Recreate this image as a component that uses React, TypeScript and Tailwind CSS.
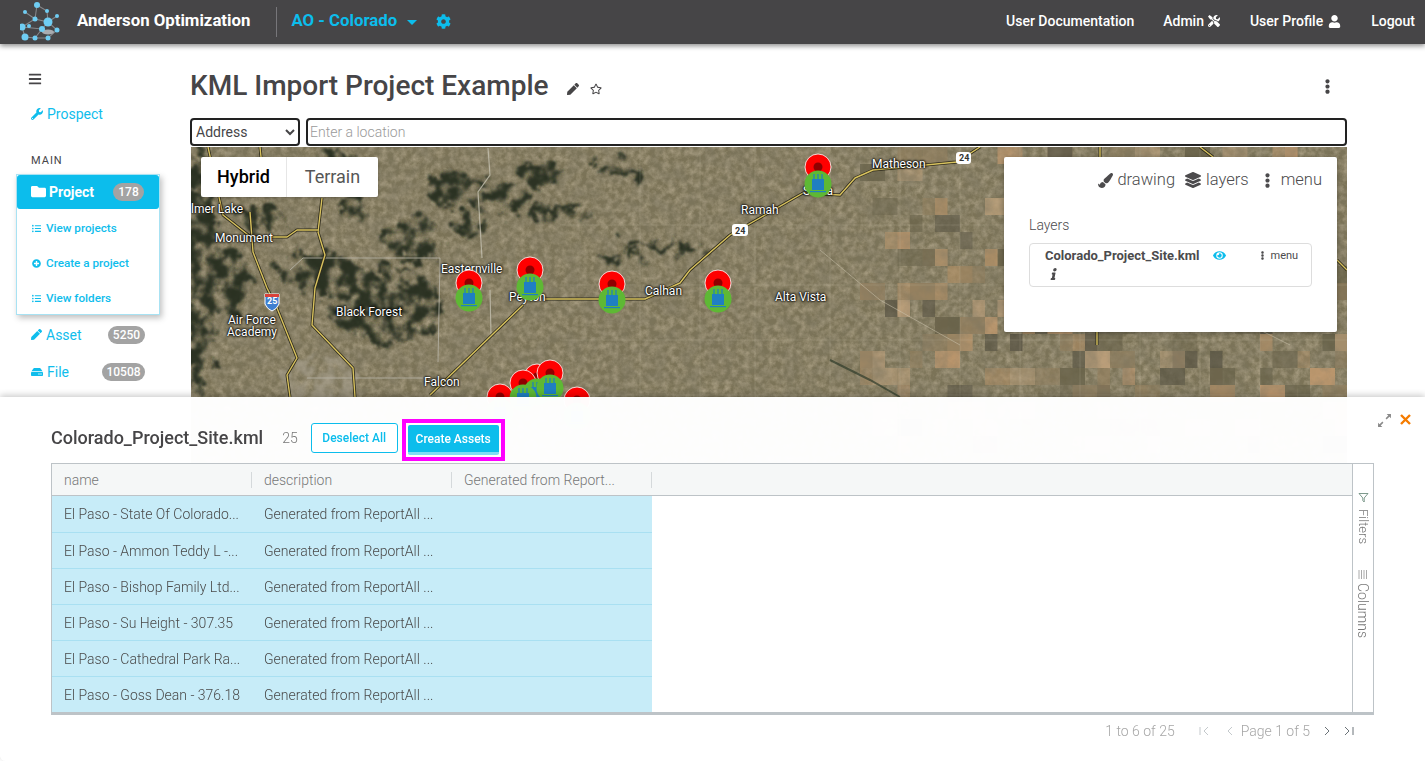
import {
  FaBars, FaCog, FaEllipsisV, FaEye, FaFolder, FaHdd, FaInfo, FaLayerGroup, FaListUl, FaPaintBrush, FaPen,
  FaPlusCircle, FaRegStar, FaTools, FaUser, FaWrench,
} from 'react-icons/fa';

const FONT = "font-['Roboto','Liberation_Sans',sans-serif]";

const rows = [
  'El Paso - State Of Colorado...',
  'El Paso - Ammon Teddy L -...',
  'El Paso - Bishop Family Ltd...',
  'El Paso - Su Height - 307.35',
  'El Paso - Cathedral Park Ra...',
  'El Paso - Goss Dean - 376.18',
];

const labels = [
  { text: 'lmer Lake', x: 191, y: 209 },
  { text: 'Monument', x: 215, y: 238 },
  { text: 'Black Forest', x: 336, y: 312 },
  { text: 'Easternville', x: 441, y: 269 },
  { text: 'Peyton', x: 509, y: 297 },
  { text: 'Falcon', x: 424, y: 382 },
  { text: 'Calhan', x: 645, y: 291 },
  { text: 'Ramah', x: 741, y: 210 },
  { text: 'Simla', x: 803, y: 191 },
  { text: 'Matheson', x: 872, y: 164 },
  { text: 'Alta Vista', x: 775, y: 297 },
  { text: 'Air Force', x: 228, y: 320 },
  { text: 'Academy', x: 227, y: 332 },
];

const pins = [
  { x: 469, y: 283, gy: 298 },
  { x: 612, y: 284, gy: 300 },
  { x: 718, y: 283, gy: 299 },
  { x: 818, y: 167, gy: 184 },
  { x: 530, y: 270, gy: 287 },
  { x: 500, y: 397, gy: 412 },
  { x: 577, y: 400, gy: 416 },
  { x: 537, y: 377, gy: 392 },
  { x: 550, y: 373, gy: 388 },
  { x: 523, y: 383, gy: 398 },
];

const forest = [
  [198, 270, 18, 125], [262, 218, 22, 14], [318, 272, 42, 20], [385, 305, 58, 38], [412, 237, 30, 24],
  [452, 190, 24, 20], [500, 198, 32, 16], [540, 172, 22, 14], [470, 225, 20, 9], [228, 282, 22, 36],
  [352, 205, 14, 16], [620, 170, 24, 10], [200, 180, 14, 34], [560, 214, 34, 6], [660, 247, 46, 5],
  [620, 258, 30, 4], [340, 160, 20, 10],
];

// fixed pseudo random numbers so the fields stay the same on every load
function rnd(i: number) {
  const v = Math.sin(i * 12.9898) * 43758.5453;
  return v - Math.floor(v);
}

const fieldColors = ['#b08f66', '#bb9f7a', '#5a5544', '#94805f', '#686249', '#c0986e'];
const fields = Array.from({ length: 240 }, (_, i) => ({
  x: 860 + Math.floor(rnd(i + 1) * 40) * 12.5,
  y: 147 + Math.floor(rnd(i + 300) * 18) * 17,
  w: rnd(i + 600) > 0.5 ? 12.5 : 25,
  fill: fieldColors[Math.floor(rnd(i + 900) * 6)],
  o: 0.45 + rnd(i + 1200) * 0.5,
}));

function MapArt() {
  const road = (d: string, key: string) => (
    <g key={key} fill="none" strokeLinejoin="round">
      <path d={d} stroke="#2d2a1c" strokeWidth="3" />
      <path d={d} stroke="#d8c25e" strokeWidth="1.4" />
    </g>
  );
  return (
    <svg viewBox="191 147 1156 320" className="absolute inset-0 w-full h-full" preserveAspectRatio="none">
      <defs>
        <filter id="grain" x="0" y="0" width="100%" height="100%">
          <feTurbulence type="fractalNoise" baseFrequency="0.06" numOctaves="5" seed="7" />
          <feColorMatrix values="0 0 0 0 0.2  0 0 0 0 0.18  0 0 0 0 0.12  0.9 0 0 0 -0.3" />
        </filter>
        <filter id="grainLight" x="0" y="0" width="100%" height="100%">
          <feTurbulence type="fractalNoise" baseFrequency="0.16" numOctaves="4" seed="21" />
          <feColorMatrix values="0 0 0 0 0.72  0 0 0 0 0.62  0 0 0 0 0.46  0 0.8 0 0 -0.25" />
        </filter>
        <filter id="rough" x="-30%" y="-30%" width="160%" height="160%">
          <feTurbulence type="fractalNoise" baseFrequency="0.07" numOctaves="4" seed="3" result="n" />
          <feDisplacementMap in="SourceGraphic" in2="n" scale="34" result="d" />
          <feColorMatrix in="n" values="0 0 0 0 0  0 0 0 0 0  0 0 0 0 0  0 0 5 0 -1.9" result="m" />
          <feComposite in="d" in2="m" operator="in" />
          <feGaussianBlur stdDeviation="1.3" />
        </filter>
      </defs>
      <rect x="191" y="147" width="1156" height="320" fill="#7b7357" />
      <rect x="191" y="147" width="1156" height="320" filter="url(#grainLight)" />
      {fields.map((f, i) => (
        <rect key={i} x={f.x} y={f.y} width={f.w} height="17" fill={f.fill} opacity={f.o} />
      ))}
      <rect x="191" y="147" width="1156" height="320" filter="url(#grain)" />
      <g filter="url(#rough)" fill="#232b1d" opacity="0.9">
        {forest.map(([cx, cy, rx, ry], i) => (
          <ellipse key={i} cx={cx} cy={cy} rx={rx} ry={ry} />
        ))}
      </g>
      <ellipse cx="320" cy="385" rx="40" ry="30" fill="#a9a292" opacity="0.55" filter="url(#rough)" />
      <g stroke="#c9c2ac" strokeWidth="0.7" opacity="0.25">
        {[640, 700, 755, 830, 900, 960, 1020, 1080, 1140, 1200, 1260].map((x) => (
          <line key={x} x1={x} y1="147" x2={x} y2="467" />
        ))}
        {[225, 285, 340, 395].map((y) => (
          <line key={y} x1="560" y1={y} x2="1347" y2={y} />
        ))}
      </g>
      <path d="M290 270 L303 258 H440 L438 362 M307 378 H423" fill="none" stroke="#b5b2a5" strokeWidth="1" opacity="0.85" />
      <path d="M488 148 L490 175 L478 192 L482 258 M490 290 L491 335" fill="none" stroke="#c4c0b0" strokeWidth="1.2" opacity="0.8" />
      <path d="M820 250 L880 300 L960 345 M1110 250 L1180 290 L1290 345" fill="none" stroke="#cfc8b2" strokeWidth="1" opacity="0.5" />
      <path d="M830 360 L870 380 L900 397" fill="none" stroke="#2e3a2a" strokeWidth="2" opacity="0.7" />
      {[
        'M208 147 L223 215 L252 238 M250 212 L253 252 L267 288 L277 308 L297 358 L287 375 L290 397',
        'M260 147 L261 157 M322 198 L318 232 L325 255 L315 288 L312 325 L353 368 L355 397',
        'M253 237 H287 L297 230 H318',
        'M523 305 L430 395',
        'M545 299 H645 L680 283 L690 270 L730 235 L803 193 L840 195 L855 178 L873 170 L957 162 L980 147',
        'M1100 147 V157 M1200 147 L1213 157 M1097 332 V345 M1337 260 L1347 270',
      ].map((d, i) => road(d, `r${i}`))}
      <path d="M265 294 h14 v10 q-2 5 -7 7 q-5 -2 -7 -7z" fill="#3f7fd0" stroke="#fff" strokeWidth="1" />
      <rect x="265" y="294" width="14" height="3" fill="#d9423a" />
      <rect x="732" y="224" width="16" height="12" rx="3" fill="#fff" />
      <rect x="956" y="152" width="15" height="12" rx="3" fill="#fff" />
    </svg>
  );
}

// red marker + green asset marker on top, they hide the place names below them
function MapPins() {
  return (
    <svg viewBox="191 147 1156 320" className="absolute inset-0 w-full h-full" preserveAspectRatio="none">
      {pins.map((p, i) => (
        <g key={i}>
          <circle cx={p.x} cy={p.y} r="13" fill="#fe0000" stroke="#fff" strokeWidth="0.8" />
          <circle cx={p.x} cy={p.y} r="4.5" fill="#8f0000" />
        </g>
      ))}
      {pins.map((p, i) => (
        <g key={i}>
          <circle cx={p.x} cy={p.gy} r="13.5" fill="#5eb834" />
          <path d={`M${p.x - 4} ${p.gy - 10} v5 M${p.x} ${p.gy - 10} v5 M${p.x + 4} ${p.gy - 10} v5`} stroke="#1f7fc2" strokeWidth="1.2" />
          <rect x={p.x - 6} y={p.gy - 5} width="12" height="11" fill="#1f7fc2" />
          <rect x={p.x - 8} y={p.gy + 7} width="16" height="1.2" fill="#1f7fc2" />
        </g>
      ))}
    </svg>
  );
}

function Logo() {
  const dots = [
    [37, 3, 3], [47, 9, 2], [57, 14, 2], [25, 10, 2], [35, 17, 2.5], [48, 20, 4.5], [22, 25, 3.5], [42, 27, 3],
    [57, 28, 2.5], [25, 35, 3.5], [35, 36, 2.5], [48, 36, 2.5], [29, 24, 2],
  ];
  return (
    <svg width="40" height="40" viewBox="20 0 40 40" className="shrink-0">
      <path d="M37 3L47 9L48 20L35 17L25 10M37 3L35 17L22 25L25 35L35 36L48 36L57 28L48 20L42 27L22 25M57 14L48 20M42 27L35 36" stroke="#85878b" strokeWidth="1.1" fill="none" />
      <ellipse cx="48" cy="30" rx="6" ry="2.5" fill="#a8abb0" />
      {dots.map(([cx, cy, r], i) => (
        <circle key={i} cx={cx} cy={cy} r={r} fill="#6fcdf3" />
      ))}
    </svg>
  );
}

function Header() {
  return (
    <header className="relative z-10 h-11 bg-[#464547] flex items-center shadow-[0_2px_5px_rgba(0,0,0,0.45)] text-white text-sm font-medium">
      <div className="ml-[20px] w-[40px]">
        <Logo />
      </div>
      <span className="ml-[17px] text-[16.8px] font-bold -mt-[2px]">Anderson Optimization</span>
      <span className="ml-[26px] h-[30px] border-l border-[#77767a]" />
      <span className="ml-[14px] text-[16.8px] font-bold text-[#0cbdec] -mt-[2px]">AO - Colorado</span>
      <span className="ml-[10px] border-x-[5px] border-t-[5px] border-x-transparent border-t-[#0cbdec]" />
      <FaCog className="ml-[19px] text-[#0cbdec] text-[15px] -mt-[2px]" />
      <div className="ml-auto mr-[10px] flex items-center -mt-[2px]">
        <span>User Documentation</span>
        <span className="ml-[29px] flex items-center gap-1">Admin <FaTools className="text-[12px]" /></span>
        <span className="ml-[30px] flex items-center gap-[5px]">User Profile <FaUser className="text-[13px]" /></span>
        <span className="ml-[30px]">Logout</span>
      </div>
    </header>
  );
}

function Badge({ children, className }: { children: React.ReactNode; className: string }) {
  return (
    <span className={`h-[18px] rounded-full bg-[#a3a3a3] text-white text-xs font-medium flex items-center justify-center ${className}`}>
      {children}
    </span>
  );
}

function Sidebar() {
  return (
    <aside className="w-[190px] shrink-0 text-[#0fbdec] text-sm">
      <FaBars className="ml-[28px] mt-[28px] text-[14px] text-[#464547]" />
      <div className="ml-[31px] mt-[18px] flex items-center gap-1 h-5">
        <FaWrench className="text-[12px]" /> Prospect
      </div>
      <div className="ml-[31px] mt-[29px] text-[11px] tracking-[1px] text-[#464547]">MAIN</div>
      <div className="ml-[16px] mt-[5px] w-[144px] h-[141px] border border-[#a8e2f3] shadow-[2px_3px_6px_rgba(0,0,0,0.25)] bg-white">
        <div className="h-[34px] bg-[#0cbdec] rounded-[3px] text-white flex items-center pl-[14px] pr-[15px] font-bold">
          <FaFolder className="text-[15px] mr-[3px]" /> Project
          <Badge className="ml-auto w-[31px]">178</Badge>
        </div>
        <div className="text-[11.7px] font-medium pt-[2px]">
          <div className="h-[35px] flex items-center pl-[15px] gap-[5px]"><FaListUl className="text-[9px]" /> View projects</div>
          <div className="h-[35px] flex items-center pl-[15px] gap-[5px]"><FaPlusCircle className="text-[9px]" /> Create a project</div>
          <div className="h-[35px] flex items-center pl-[15px] gap-[5px]"><FaListUl className="text-[9px]" /> View folders</div>
        </div>
      </div>
      <div className="ml-[31px] w-[114px] mt-[10px] h-[20px] flex items-center gap-1">
        <FaPen className="text-[11px]" /> Asset
        <Badge className="ml-auto w-[37px]">5250</Badge>
      </div>
      <div className="ml-[31px] w-[114px] mt-[17px] h-[20px] flex items-center gap-1">
        <FaHdd className="text-[12px]" /> File
        <Badge className="ml-auto w-[43px]">10508</Badge>
      </div>
    </aside>
  );
}

function MapPanel() {
  return (
    <div className="absolute left-[813px] top-[10px] w-[333px] h-[175px] bg-white rounded-[2px] shadow-[0_1px_4px_rgba(0,0,0,0.3)] text-[#4c4b4d]">
      <div className="flex justify-end items-center h-[45px] pt-[1px] pr-[15px] text-[16.5px] font-light">
        <span className="flex items-center gap-[4px]"><FaPaintBrush className="text-[15px]" /> drawing</span>
        <span className="ml-[10px] flex items-center gap-[5px]"><FaLayerGroup className="text-[16px]" /> layers</span>
        <span className="ml-[11px] flex items-center gap-[6px]"><FaEllipsisV className="text-[15px]" /> menu</span>
      </div>
      <div className="ml-[25px] mt-[14px] text-sm font-light leading-[18px]">Layers</div>
      <div className="ml-[25px] mt-[9px] w-[283px] h-[44px] border border-[#dddddd] rounded-[4px] relative pl-[15px] pt-[3px]">
        <div className="flex items-center text-[13px] font-bold leading-[17px]">
          Colorado_Project_Site.kml
          <FaEye className="ml-[13px] text-[13px] text-[#0cbdec]" />
          <FaEllipsisV className="ml-[32px] text-[9px]" />
          <span className="ml-[4px] text-[11px] font-normal -mt-[1px]">menu</span>
        </div>
        <FaInfo className="ml-[3px] mt-[4px] text-[12px] -skew-x-12" />
      </div>
    </div>
  );
}

function Main() {
  return (
    <main className="flex-1 pr-[78px] min-w-0">
      <div className="h-[74px] flex items-center text-[#464547]">
        <h1 className="text-[28px] font-medium mt-[10px]">KML Import Project Example</h1>
        <FaPen className="ml-[18px] mt-[16px] text-[12px]" />
        <FaRegStar className="ml-[11px] mt-[16px] text-[12px]" />
        <FaEllipsisV className="ml-auto mr-[12px] mt-[10px] text-[15px]" />
      </div>
      <div className="flex gap-[6px] h-[28px] mb-[1px]">
        <select className="w-[110px] border-2 border-[#222] rounded-[4px] bg-white text-sm text-[#464547] px-0 outline-none">
          <option>Address</option>
        </select>
        <input
          placeholder="Enter a location"
          className="flex-1 border-2 border-[#222] rounded-[4px] px-[2px] text-sm outline-none placeholder:text-[#9a9a9a] placeholder:font-light"
        />
      </div>
      <div className="relative h-[320px] ml-[1px] overflow-hidden">
        <MapArt />
        {labels.map((l) => (
          <span
            key={l.text}
            className="absolute text-xs leading-none text-white whitespace-nowrap -translate-y-1/2 [text-shadow:0_0_2px_#000,0_0_2px_#000,0_0_3px_#000]"
            style={{ left: l.x - 191, top: l.y - 147 }}
          >
            {l.text}
          </span>
        ))}
        <MapPins />
        <span className="absolute left-[544px] top-[78px] text-[9px] leading-[12px] font-bold text-[#333]">24</span>
        <span className="absolute left-[768px] top-[5px] text-[9px] leading-[12px] font-bold text-[#333]">24</span>
        <span className="absolute left-[76px] top-[148px] text-[9px] leading-[12px] font-bold text-white">25</span>
        <div className="absolute left-[10px] top-[10px] w-[177px] h-[40px] bg-white rounded-[2px] flex items-center text-lg shadow-[0_1px_3px_rgba(0,0,0,0.25)]">
          <span className="w-[86px] h-full flex items-center justify-center font-medium text-black border-r border-[#e6e6e6]">Hybrid</span>
          <span className="flex-1 text-center text-[#565656]">Terrain</span>
        </div>
        <MapPanel />
      </div>
    </main>
  );
}

function ResultGrid() {
  return (
    <div className="mx-[51px] w-[1323px] h-[252px] border border-[#bdc3c7] border-b-[3px] flex text-sm text-[#4a4a4a] font-light">
      <div className="flex-1 min-w-0 overflow-hidden">
        <div className="h-[32px] bg-[#f5f7f7] border-b border-[#bdc3c7] flex items-center text-[#777]">
          {['name', 'description', 'Generated from Report...'].map((h) => (
            <div key={h} className="w-[200px] pl-[12px] h-[16px] leading-[16px] border-r border-[#d5d9db]">{h}</div>
          ))}
        </div>
        {rows.map((name, i) => (
          <div key={name} className={`w-[600px] ${i === 0 ? 'h-[37px]' : 'h-[36px]'} bg-[#c7ecf8] border-b border-[#a9e0f2] flex items-center`}>
            <div className="w-[200px] pl-[12px] truncate">{name}</div>
            <div className="w-[200px] pl-[12px]">Generated from ReportAll ...</div>
          </div>
        ))}
      </div>
      <div className="w-[21px] border-l border-[#bdc3c7] flex flex-col items-center pt-[28px] text-[#777]">
        <svg width="11" height="11" viewBox="0 0 11 11" fill="none" stroke="#6f8f80" strokeWidth="0.9"><path d="M1 1.5H10L6.2 6V10L4.8 8.6V6z" /></svg>
        <span className="[writing-mode:vertical-lr] text-[13px] mt-[6px] leading-none">Filters</span>
        <svg width="10" height="9" viewBox="0 0 10 9" className="mt-[26px]" stroke="#aaa" strokeWidth="1"><path d="M1 0V9M3.5 0V9M6 0V9M8.5 0V9" /></svg>
        <span className="[writing-mode:vertical-lr] text-sm mt-[4px] leading-none">Columns</span>
      </div>
    </div>
  );
}

function Paging() {
  const muted = 'stroke-[#c4c9cc]';
  return (
    <div className="mt-[7px] mr-[70px] h-[18px] flex items-center justify-end text-sm font-light text-[#a6a6a6]">
      <span>1 to 6 of 25</span>
      <svg width="11" height="10" viewBox="0 0 11 10" fill="none" className={`ml-[24px] ${muted}`}><path d="M1 1V9M9 1L5 5L9 9" /></svg>
      <svg width="7" height="10" viewBox="0 0 7 10" fill="none" className={`ml-[16px] ${muted}`}><path d="M6 1L2 5L6 9" /></svg>
      <span className="ml-[8px]">Page 1 of 5</span>
      <svg width="7" height="10" viewBox="0 0 7 10" fill="none" className="ml-[14px] stroke-[#6b7378]"><path d="M1 1L5 5L1 9" /></svg>
      <svg width="11" height="10" viewBox="0 0 11 10" fill="none" className="ml-[13px] stroke-[#6b7378]"><path d="M1 1L5 5L1 9M9 1V9" /></svg>
    </div>
  );
}

function Drawer() {
  return (
    <section className="fixed left-0 right-0 top-[397px] bottom-0 z-20 bg-white/[0.985] shadow-[0_-2px_6px_rgba(0,0,0,0.2)] rounded-bl-[6px]">
      <div className="h-[66px] flex items-center pl-[51px] relative">
        <h2 className="text-lg font-medium text-[#464547] mt-[15px]">Colorado_Project_Site.kml</h2>
        <span className="ml-[19px] mt-[15px] text-sm font-light text-[#777]">25</span>
        <button className="ml-[13px] mt-[15px] w-[87px] h-[30px] border border-[#0cbdec] rounded-[3px] bg-white text-xs font-medium text-[#0cbdec]">Deselect All</button>
        <div className="ml-[4px] mt-[20px] w-[103px] h-[42px] border-[4px] border-[#ff00ff] p-[2px]">
          <button className="w-full h-full rounded-[2px] bg-[#0cbdec] border-b-[3px] border-[#7fdcf5] text-xs font-medium text-white">Create Assets</button>
        </div>
        <svg width="15" height="15" viewBox="0 0 14 14" className="absolute left-[1377px] top-[16px]" fill="#8a8a8a" stroke="#8a8a8a">
          <path d="M8.5 5.5L12.5 1.5M1.5 12.5L5.5 8.5" strokeWidth="1.4" />
          <path d="M9 1H13V5zM1 9V13H5z" stroke="none" />
        </svg>
        <svg width="11" height="11" viewBox="0 0 11 11" className="absolute left-[1400px] top-[17px]" stroke="#f57c00" strokeWidth="2.4"><path d="M1 1L10 10M10 1L1 10" /></svg>
      </div>
      <ResultGrid />
      <Paging />
    </section>
  );
}

export default function App() {
  return (
    <div className={`h-[761px] overflow-hidden bg-white relative ${FONT}`}>
      <Header />
      <div className="flex">
        <Sidebar />
        <Main />
      </div>
      <Drawer />
    </div>
  );
}
